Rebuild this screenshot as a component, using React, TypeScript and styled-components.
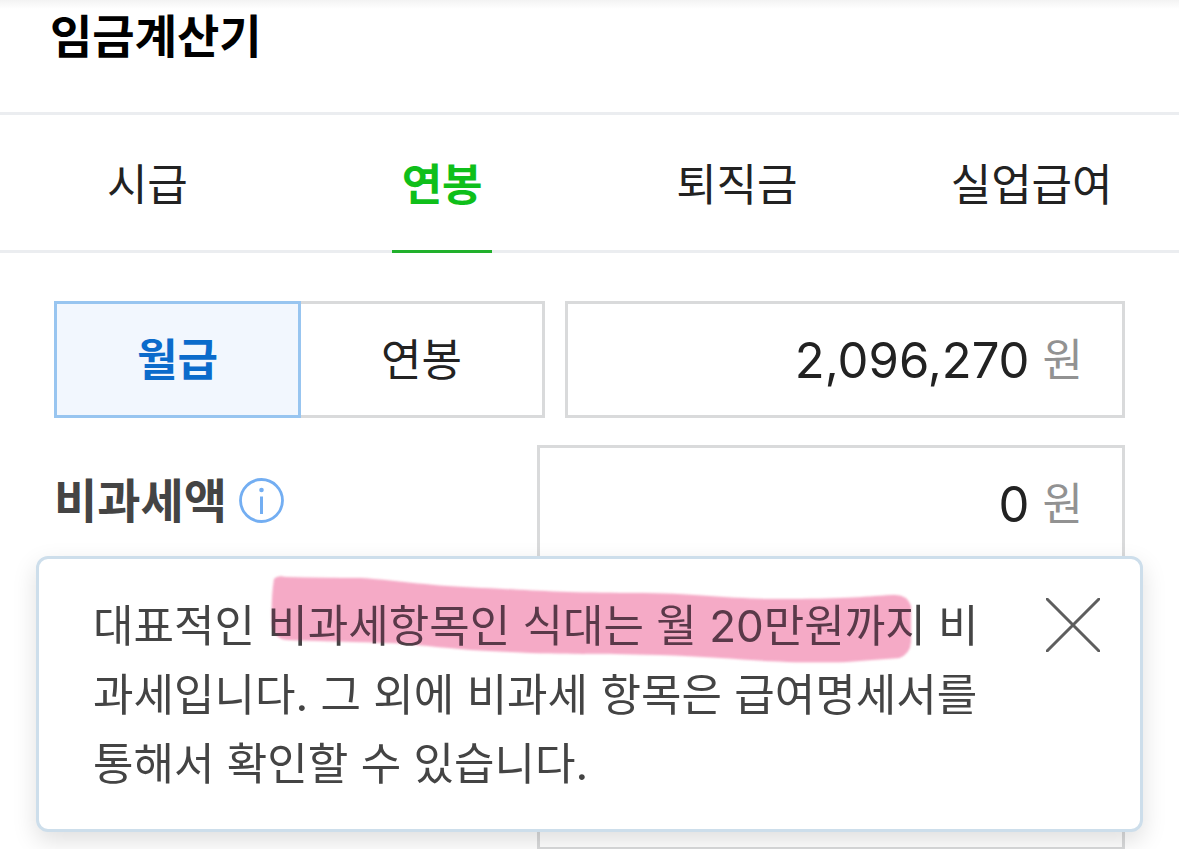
import React, { useState } from "react";
import styled, { createGlobalStyle, css } from "styled-components";

const GlobalStyle = createGlobalStyle`
  *, *::before, *::after { box-sizing: border-box; }
  body {
    margin: 0;
    background: #fff;
    color: #222;
    font-family: Inter, "Noto Sans CJK KR", sans-serif;
    font-size: 44px;
    line-height: 68px;
  }
  button, input { font: inherit; color: inherit; margin: 0; }
  button { cursor: pointer; }
`;

const Page = styled.div`
  height: 100vh;
  overflow: hidden auto;
  scrollbar-width: none;
`;

const Header = styled.header`
  padding: 2px 50px 42px;
  border-bottom: 3px solid #ebedf0;
  background: linear-gradient(#f3f3f3, #fff 9px);
`;

const Title = styled.h1`
  margin: 0;
  color: #000;
  font-size: 46px;
  font-weight: 700;
  line-height: 68px;
`;

const Tabs = styled.nav`
  display: grid;
  grid-template-columns: repeat(4, 1fr);
  border-bottom: 3px solid #ebedf0;
`;

const Tab = styled.button<{ $active: boolean }>`
  display: flex;
  flex-direction: column;
  align-items: center;
  padding: 36px 0 0;
  margin-bottom: -3px;
  border: 0;
  background: none;
  ${({ $active }) => $active && css`
    color: #0fbf1a;
    font-weight: 700;
  `}
  &::after {
    content: "";
    width: 100px;
    height: 3px;
    margin-top: 31px;
    background: ${({ $active }) => ($active ? "#21b02c" : "transparent")};
  }
`;

const Form = styled.form`
  display: flex;
  flex-direction: column;
  gap: 27px;
  padding: 48px 54px 0;
`;

const Row = styled.div<{ $columns?: string }>`
  position: relative;
  display: grid;
  grid-template-columns: ${({ $columns }) => $columns || "483fr 588fr"};
  align-items: center;
`;

const Toggle = styled.div`
  display: flex;
  margin-right: 20px;
`;

const ToggleButton = styled.button<{ $active: boolean }>`
  flex: 1;
  height: 117px;
  padding: 0;
  border: 3px solid #d9dadb;
  background: #fff;
  & + & { margin-left: -3px; }
  ${({ $active }) => $active && css`
    position: relative;
    border-color: #98c5f0;
    background: #f2f7fe;
    color: #0b6bcb;
    font-weight: 700;
  `}
`;

const AmountBox = styled.div`
  grid-column: 2;
  display: flex;
  align-items: center;
  gap: 13px;
  min-width: 0;
  height: 117px;
  padding: 0 39px;
  border: 3px solid #d9dadb;
  background: #fff;
`;

const AmountInput = styled.input`
  flex: 1;
  min-width: 0;
  padding: 3px 0 0;
  border: 0;
  outline: 0;
  background: none;
  font-size: 49px;
  text-align: right;
`;

const Unit = styled.span`
  color: #929292;
`;

const LabelGroup = styled.div`
  display: flex;
  align-items: center;
  gap: 12px;
  padding-bottom: 6px;
`;

const Label = styled.label`
  color: #444;
  font-size: 47px;
  font-weight: 700;
`;

const IconButton = styled.button`
  display: flex;
  flex: none;
  padding: 0;
  border: 0;
  background: none;
`;

const Popup = styled.aside`
  position: absolute;
  z-index: 1;
  top: 111px;
  left: -18px;
  right: -18px;
  display: flex;
  justify-content: space-between;
  align-items: flex-start;
  padding: 33px 40px 30px 54px;
  border: 3px solid #cddeeb;
  border-radius: 12px;
  background: #fff;
  box-shadow: 0 9px 24px rgba(0, 0, 0, 0.13);
`;

const PopupText = styled.p`
  position: relative;
  flex: 1;
  margin: 0 54px 0 0;
  color: #444;
  line-height: 69px;
`;

const Stroke = styled.svg`
  position: absolute;
  top: -20px;
  left: 176px;
  mix-blend-mode: multiply;
  pointer-events: none;
`;

const Tint = styled(Stroke)`
  mix-blend-mode: normal;
`;

const CloseButton = styled(IconButton)`
  margin-top: 6px;
`;

const strokePath =
  "M3 5 Q7 1 14 3 Q50 4 90 4 C130 7 160 12 210 14 S290 19 360 19 S450 25 510 25 S590 23 622 21 Q636 20 640 32 L640 68 Q639 80 628 84 Q600 86 575 88 C500 90 460 83 390 81 S300 81 240 78 C180 76 150 70 120 69 S50 67 16 66 Q3 65 1 50 Q0 25 3 5Z";

function InfoIcon() {
  return (
    <svg width="45" height="45" viewBox="0 0 45 45" fill="none" aria-hidden="true">
      <circle cx="22.5" cy="22.5" r="21" stroke="#73aef2" strokeWidth="2.8" />
      <circle cx="22.5" cy="12" r="2.3" fill="#73aef2" />
      <path d="M22.5 18.5V36" stroke="#73aef2" strokeWidth="3" />
    </svg>
  );
}

function CloseIcon() {
  return (
    <svg width="54" height="54" viewBox="0 0 54 54" fill="none" aria-hidden="true">
      <path d="M0 0 54 54M54 0 0 54" stroke="#5e5e5e" strokeWidth="3" />
    </svg>
  );
}

function MarkerStroke() {
  return (
    <>
      <Stroke width="648" height="96" viewBox="-2 -2 648 96" aria-hidden="true">
        <defs>
          <filter id="soft" x="-5%" y="-10%" width="110%" height="120%">
            <feGaussianBlur stdDeviation="1.2" />
          </filter>
        </defs>
        <path d={strokePath} fill="#f9b4c9" filter="url(#soft)" />
      </Stroke>
      <Tint width="648" height="96" viewBox="-2 -2 648 96" aria-hidden="true">
        <path d={strokePath} fill="#dc71b4" fillOpacity="0.15" filter="url(#soft)" />
      </Tint>
    </>
  );
}

const tabs = ["시급", "연봉", "퇴직금", "실업급여"];
const periods = ["월급", "연봉"];

export default function App() {
  const [tab, setTab] = useState("연봉");
  const [period, setPeriod] = useState("월급");
  const [open, setOpen] = useState(true);
  const [pay, setPay] = useState("2,096,270");
  const [exempt, setExempt] = useState("0");

  return (
    <>
      <GlobalStyle />
      <Page>
        <Header>
          <Title>임금계산기</Title>
        </Header>
        <Tabs>
          {tabs.map((name) => (
            <Tab key={name} type="button" $active={name === tab} onClick={() => setTab(name)}>
              {name}
            </Tab>
          ))}
        </Tabs>
        <Form onSubmit={(e) => e.preventDefault()}>
          <Row $columns="511fr 560fr">
            <Toggle>
              {periods.map((name) => (
                <ToggleButton
                  key={name}
                  type="button"
                  $active={name === period}
                  aria-pressed={name === period}
                  onClick={() => setPeriod(name)}
                >
                  {name}
                </ToggleButton>
              ))}
            </Toggle>
            <AmountBox>
              <AmountInput aria-label={period} value={pay} onChange={(e) => setPay(e.target.value)} />
              <Unit>원</Unit>
            </AmountBox>
          </Row>
          <Row>
            <LabelGroup>
              <Label htmlFor="exempt">비과세액</Label>
              <IconButton type="button" aria-label="비과세액 안내" onClick={() => setOpen(!open)}>
                <InfoIcon />
              </IconButton>
            </LabelGroup>
            <AmountBox>
              <AmountInput id="exempt" value={exempt} onChange={(e) => setExempt(e.target.value)} />
              <Unit>원</Unit>
            </AmountBox>
            {open && (
              <Popup>
                <PopupText>
                  대표적인 비과세항목인 식대는 월 20만원까지 비과세입니다. 그 외에 비과세 항목은 급여명세서를 통해서 확인할 수 있습니다.
                  <MarkerStroke />
                </PopupText>
                <CloseButton type="button" aria-label="닫기" onClick={() => setOpen(false)}>
                  <CloseIcon />
                </CloseButton>
              </Popup>
            )}
          </Row>
          <Row>
            <AmountBox>
              <AmountInput aria-label="부양가족수" />
            </AmountBox>
          </Row>
          <Row>
            <AmountBox>
              <AmountInput aria-label="자녀수" />
            </AmountBox>
          </Row>
        </Form>
      </Page>
    </>
  );
}
